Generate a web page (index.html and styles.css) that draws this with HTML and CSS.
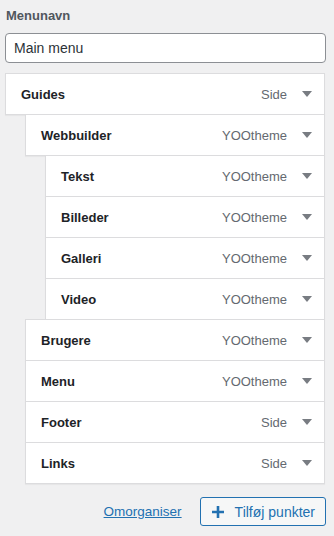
FILE: index.html
```html
<!DOCTYPE html>
<html>
<head>
    <title>Menu</title>
    <link rel="stylesheet" href="styles.css">
</head>
<body>
    <div class="menu-panel">
        <label class="menu-label" for="menu-name">Menunavn</label>
        <input type="text" id="menu-name" class="menu-name" value="Main menu">

        <ul class="menu-items">
            <li class="menu-item depth-0"><span class="item-title">Guides</span><span class="item-type">Side</span><span class="item-arrow"></span></li>
            <li class="menu-item depth-1"><span class="item-title">Webbuilder</span><span class="item-type">YOOtheme</span><span class="item-arrow"></span></li>
            <li class="menu-item depth-2"><span class="item-title">Tekst</span><span class="item-type">YOOtheme</span><span class="item-arrow"></span></li>
            <li class="menu-item depth-2"><span class="item-title">Billeder</span><span class="item-type">YOOtheme</span><span class="item-arrow"></span></li>
            <li class="menu-item depth-2"><span class="item-title">Galleri</span><span class="item-type">YOOtheme</span><span class="item-arrow"></span></li>
            <li class="menu-item depth-2"><span class="item-title">Video</span><span class="item-type">YOOtheme</span><span class="item-arrow"></span></li>
            <li class="menu-item depth-1"><span class="item-title">Brugere</span><span class="item-type">YOOtheme</span><span class="item-arrow"></span></li>
            <li class="menu-item depth-1"><span class="item-title">Menu</span><span class="item-type">YOOtheme</span><span class="item-arrow"></span></li>
            <li class="menu-item depth-1"><span class="item-title">Footer</span><span class="item-type">Side</span><span class="item-arrow"></span></li>
            <li class="menu-item depth-1"><span class="item-title">Links</span><span class="item-type">Side</span><span class="item-arrow"></span></li>
        </ul>

        <div class="menu-actions">
            <a href="#" class="reorder-link">Omorganiser</a>
            <button class="add-button">
                <svg class="plus-icon" width="12" height="12" viewBox="0 0 12 12"><path d="M6 0v12M0 6h12" stroke="#2271b1" stroke-width="2.6"/></svg>
                Tilføj punkter
            </button>
        </div>
    </div>
</body>
</html>
```

FILE: styles.css
```css
body {
    margin: 0;
    padding: 0;
    background-color: #f0f0f1;
    font-family: "Liberation Sans", Arial, sans-serif;
    color: #1d2327;
}
.menu-panel {
    width: 321px;
    padding: 7px 0 0 5px;
}
.menu-label {
    display: block;
    font-size: 13px;
    font-weight: 600;
    color: #50575e;
    line-height: 18px;
    padding-left: 1px;
}
.menu-name {
    display: block;
    box-sizing: border-box;
    width: 321px;
    height: 30px;
    margin-top: 8px;
    padding: 0 8px;
    border: 1px solid #8c8f94;
    border-radius: 4px;
    background: #fff;
    font-family: "Liberation Sans", Arial, sans-serif;
    font-size: 14px;
    color: #2c3338;
}
.menu-items {
    list-style: none;
    margin: 10px 0 0 0;
    padding: 0;
}
.menu-item {
    display: flex;
    align-items: center;
    box-sizing: border-box;
    height: 42px;
    margin-top: -1px;
    margin-right: 1px;
    padding: 0 12px 0 15px;
    background: #fff;
    border: 1px solid #dcdcde;
    box-shadow: 0 1px 1px rgba(0, 0, 0, 0.04);
    font-size: 13px;
}
.menu-item:first-child {
    margin-top: 0;
}
.depth-1 {
    margin-left: 20px;
}
.depth-2 {
    margin-left: 40px;
}
.item-title {
    flex: 1;
    font-weight: 700;
    color: #1d2327;
}
.item-type {
    color: #646970;
}
.item-arrow {
    width: 0;
    height: 0;
    margin-left: 15px;
    border-left: 5px solid transparent;
    border-right: 5px solid transparent;
    border-top: 6px solid #787c82;
}
.menu-actions {
    display: flex;
    justify-content: flex-end;
    align-items: center;
    gap: 18px;
    margin-top: 13px;
}
.reorder-link {
    font-size: 13.5px;
    color: #2271b1;
    text-decoration: underline;
}
.add-button {
    display: flex;
    align-items: center;
    gap: 11px;
    box-sizing: border-box;
    height: 29px;
    padding: 0 10px 0 11px;
    border: 1px solid #2271b1;
    border-radius: 3px;
    background: #f6f7f7;
    color: #2271b1;
    font-family: "Liberation Sans", Arial, sans-serif;
    font-size: 14px;
}
```
